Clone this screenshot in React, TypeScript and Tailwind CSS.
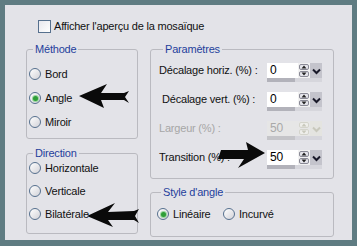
import React from 'react';

const Radio = ({ checked }: { checked?: boolean }) => (
  <span className="flex w-[12px] h-[12px] shrink-0 items-center justify-center rounded-full border border-[#56708e] bg-linear-to-br from-white to-[#d2d2d8]">
    {checked && <span className="w-[5px] h-[5px] rounded-full bg-[#2f9e38] ring-1 ring-[#9ad69f]" />}
  </span>
);

const RadioRow = ({ label, checked }: { label: string; checked?: boolean }) => (
  <div className="flex items-center gap-[4px] h-[12px]">
    <Radio checked={checked} />
    <span>{label}</span>
  </div>
);

const Group = ({ title, className, children }: { title: string; className: string; children: React.ReactNode }) => (
  <fieldset className={`rounded-[3px] border border-[#babac0] ${className}`}>
    <legend className="ml-[4px] px-[2px] leading-[13px] text-[#1f3f9c]">{title}</legend>
    {children}
  </fieldset>
);

const Spin = ({ value, disabled }: { value: string; disabled?: boolean }) => (
  <div className="flex flex-col w-[56px]">
    <div className="flex h-[15px]">
      <div className={`w-[31px] h-full pl-[3px] leading-[15px] text-[12px] ${disabled ? 'bg-[#e6e6e6] text-[#a9a9a9]' : 'bg-white text-black'}`}>{value}</div>
      <div className={`w-[12px] h-full flex flex-col items-center justify-center gap-[1px] ${disabled ? 'bg-[#e6e6e6]' : 'bg-[#f2f2f2]'}`}>
        <svg width="10" height="6" viewBox="0 0 10 6">
          <rect x="0.5" y="0.5" width="9" height="5" rx="1.5" fill={disabled ? '#eeeeea' : '#e4e4ea'} stroke={disabled ? '#d4d4cc' : '#8a8a96'} />
          <path d="M2.5 4.5 L5 1.5 L7.5 4.5 Z" fill={disabled ? '#c8c8bc' : '#222'} />
        </svg>
        <svg width="10" height="6" viewBox="0 0 10 6">
          <rect x="0.5" y="0.5" width="9" height="5" rx="1.5" fill={disabled ? '#eeeeea' : '#e4e4ea'} stroke={disabled ? '#d4d4cc' : '#8a8a96'} />
          <path d="M2.5 1.5 L5 4.5 L7.5 1.5 Z" fill={disabled ? '#c8c8bc' : '#222'} />
        </svg>
      </div>
      <div className={`w-[12px] h-[17px] flex items-center justify-center ${disabled ? 'bg-[#e4e4e0]' : 'bg-[#c4c4cc]'}`}>
        <svg width="9" height="7" viewBox="0 0 9 7">
          <path d="M1 1.5 L4.5 5 L8 1.5" fill="none" stroke={disabled ? '#c8c8bc' : '#1a1a2a'} strokeWidth="2" />
        </svg>
      </div>
    </div>
    <div className="flex h-[4px] w-[55px]">
      <div className={`w-[28px] h-full ${disabled ? 'bg-[#c4c4c8]' : 'bg-[#b2b2ba]'}`} />
      <div className="flex-1 h-full bg-[#d6d6dc]" />
    </div>
  </div>
);

const ParamRow = ({ label, value, disabled, indent }: { label: string; value: string; disabled?: boolean; indent?: boolean }) => (
  <div className="flex items-start h-[29px]">
    <span className={`w-[108px] leading-[15px] ${indent ? 'pl-[3px]' : ''} ${disabled ? 'text-[#a6a6a6]' : ''}`}>{label}</span>
    <Spin value={value} disabled={disabled} />
  </div>
);

export default function App() {
  return (
    <div className="relative w-[357px] h-[246px] bg-[#5f7c82] pt-[5px] pl-[5px] pr-[5px] pb-[6px]">
      <div className="h-full bg-[#e3e3e8] text-[#111] text-[11px] tracking-[-0.2px] font-['Liberation_Sans',Arial,sans-serif]">
        <div className="flex items-center gap-[3px] pt-[15px] pl-[33px] h-[28px]">
          <span className="w-[13px] h-[13px] border border-[#56708e] bg-linear-to-br from-[#e8e8ee] to-white" />
          <span>Afficher l'aperçu de la mosaïque</span>
        </div>
        <div className="flex gap-[12px] pl-[21px] mt-[10px]">
          <div className="flex flex-col gap-[8px] w-[112px]">
            <Group title="Méthode" className="h-[96px] pl-[2px] pt-[12px] flex flex-col gap-[12px]">
              <RadioRow label="Bord" />
              <RadioRow label="Angle" checked />
              <RadioRow label="Miroir" />
            </Group>
            <Group title="Direction" className="h-[87px] pl-[2px] pt-[2px] flex flex-col gap-[11px]">
              <RadioRow label="Horizontale" />
              <RadioRow label="Verticale" />
              <RadioRow label="Bilatérale" />
            </Group>
          </div>
          <div className="flex flex-col gap-[7px] w-[184px]">
            <Group title="Paramètres" className="h-[136px] pl-[8px] pt-[7px]">
              <ParamRow label="Décalage horiz. (%) :" value="0" />
              <ParamRow label="Décalage vert. (%) :" value="0" indent />
              <ParamRow label="Largeur (%) :" value="50" disabled />
              <ParamRow label="Transition (%) :" value="50" />
            </Group>
            <Group title="Style d'angle" className="h-[51px] pl-[6px] pt-[9px]">
              <div className="flex items-center">
                <div className="w-[66px]"><RadioRow label="Linéaire" checked /></div>
                <RadioRow label="Incurvé" />
              </div>
            </Group>
          </div>
        </div>
      </div>
      <svg className="absolute left-0 top-0 pointer-events-none" width="357" height="246" viewBox="0 0 357 246">
        <path d="M79 96 L107 84 L101 93 L124 93 L129 91 L125 97 L129 103 L124 100 L101 100 L104 108 Z" fill="#0a0a0a" />
        <path d="M87 216 L115 203 L108 212 L134 211 L139 209 L135 216 L139 223 L134 220 L108 220 L113 227 Z" fill="#0a0a0a" />
        <path d="M265 153 L246 142 L248 150 L221 150 L218 159 L244 159 L238 168 Z" fill="#0a0a0a" />
      </svg>
    </div>
  );
}
